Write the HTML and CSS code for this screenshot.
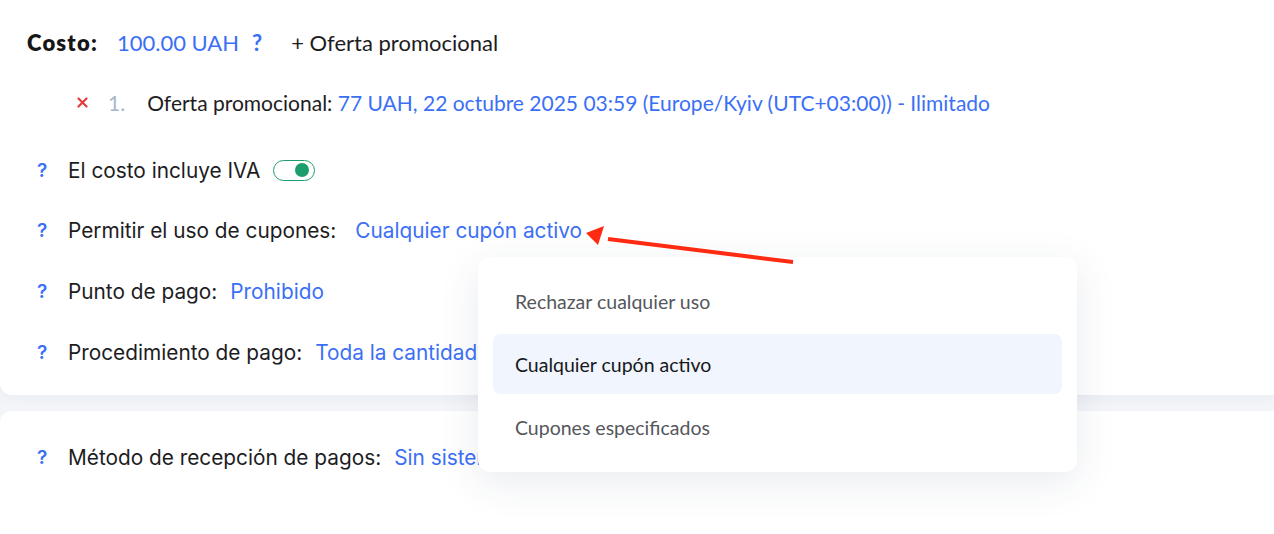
FILE: index.html
```html
<!DOCTYPE html>
<html lang="es">
<head>
    <meta charset="UTF-8">
    <title>Costo</title>
    <link rel="stylesheet" href="styles.css">
</head>
<body>

<div class="card card-top">
    <div class="price-row">
        <span class="price-label">Costo:</span>
        <span class="price-value">100.00 UAH</span>
        <span class="price-help">?</span>
        <span class="add-offer">+ Oferta promocional</span>
    </div>

    <div class="offer-row">
        <svg class="remove" width="11" height="11" viewBox="0 0 11 11">
            <path d="M1.5 1.5 L9.5 9.5 M9.5 1.5 L1.5 9.5" stroke="#e23d3d" stroke-width="2.2" stroke-linecap="round"/>
        </svg>
        <span class="offer-num">1.</span>
        <span class="offer-text">Oferta promocional: <span class="link">77 UAH, 22 octubre 2025 03:59 (Europe/Kyiv (UTC+03:00)) - Ilimitado</span></span>
    </div>

    <div class="setting first">
        <span class="help">?</span>
        <span class="label">El costo incluye IVA</span>
        <span class="toggle"><span class="knob"></span></span>
    </div>

    <div class="setting">
        <span class="help">?</span>
        <span class="label">Permitir el uso de cupones:</span>
        <span class="link value wide">Cualquier cupón activo</span>
    </div>

    <div class="setting">
        <span class="help">?</span>
        <span class="label">Punto de pago:</span>
        <span class="link value">Prohibido</span>
    </div>

    <div class="setting">
        <span class="help">?</span>
        <span class="label">Procedimiento de pago:</span>
        <span class="link value">Toda la cantidad</span>
    </div>
</div>

<div class="card card-bottom">
    <div class="setting">
        <span class="help">?</span>
        <span class="label">Método de recepción de pagos:</span>
        <span class="link value">Sin sistema de pago</span>
    </div>
</div>

<!-- dropdown opened from "Permitir el uso de cupones" -->
<div class="dropdown">
    <div class="option">Rechazar cualquier uso</div>
    <div class="option selected">Cualquier cupón activo</div>
    <div class="option">Cupones especificados</div>
</div>

<svg class="arrow" width="220" height="40" viewBox="0 0 220 40">
    <line x1="213" y1="30" x2="28" y2="7" stroke="#ff2a12" stroke-width="4"/>
    <polygon points="6,1 24,-6 18,13" fill="#ff2a12"/>
</svg>

</body>
</html>
```

FILE: styles.css
```css
body {
    margin: 0;
    background-color: #f3f5f8;
    font-family: Inter, "Noto Sans", sans-serif;
    color: #1d1d1f;
    overflow: hidden;
    height: 534px;
}

.card {
    background: #fff;
}

.card-top {
    padding: 12px 0 12px 0;
    border-radius: 0 0 0 12px;
    box-shadow: 0 4px 12px rgba(30, 50, 90, 0.04);
}

.card-bottom {
    margin-top: 16px;
    padding: 16px 0 60px 0;
    border-radius: 12px 0 0 0;
}

.price-row {
    display: flex;
    align-items: center;
    height: 60px;
    padding-left: 27px;
    font-family: Lato, sans-serif;
    font-size: 22px;
}

.price-label {
    font-weight: 800;
    color: #161616;
    letter-spacing: 1.2px;
}

.price-value {
    margin-left: 19px;
    color: #3b6ff5;
}

.price-help {
    margin-left: 13px;
    color: #3b6ff5;
    font-weight: 700;
}

.add-offer {
    margin-left: 29px;
    color: #1d1d1f;
}

.offer-row {
    display: flex;
    align-items: center;
    height: 60px;
    padding-left: 77px;
    font-family: Lato, sans-serif;
    font-size: 21px;
}

.offer-num {
    margin-left: 20px;
    color: #a8b7cc;
}

.offer-text {
    margin-left: 22px;
}

.link {
    color: #3b6ff5;
}

.setting {
    display: flex;
    align-items: center;
    height: 61px;
    padding-left: 37px;
    font-size: 20.8px;
}

.setting.first {
    margin-top: 8px;
    height: 60px;
}

.help {
    width: 31px;
    color: #3b6ff5;
    font-weight: 600;
    font-size: 19px;
}

.label {
    color: #1d1d1f;
}

.value {
    margin-left: 13px;
}

.value.wide {
    margin-left: 19px;
}

.toggle {
    display: inline-flex;
    align-items: center;
    justify-content: flex-end;
    box-sizing: border-box;
    width: 42px;
    height: 21px;
    margin-left: 13px;
    padding-right: 5px;
    border: 1.5px solid #1c9e6c;
    border-radius: 11px;
}

.knob {
    width: 14px;
    height: 14px;
    border-radius: 50%;
    background: #1c9e6c;
}

.dropdown {
    position: absolute;
    left: 478px;
    top: 257px;
    width: 599px;
    box-sizing: border-box;
    padding: 14px 15px 15px 15px;
    background: #fff;
    border-radius: 12px;
    box-shadow: 0 10px 40px rgba(40, 60, 100, 0.10);
    display: flex;
    flex-direction: column;
    gap: 3px;
    font-family: Lato, sans-serif;
    font-size: 19.5px;
}

.option {
    height: 60px;
    display: flex;
    align-items: center;
    padding-left: 22px;
    border-radius: 7px;
    color: #55575c;
}

.option.selected {
    background: #f0f5fe;
    color: #17181a;
}

.arrow {
    position: absolute;
    left: 580px;
    top: 232px;
    overflow: visible;
}
```
